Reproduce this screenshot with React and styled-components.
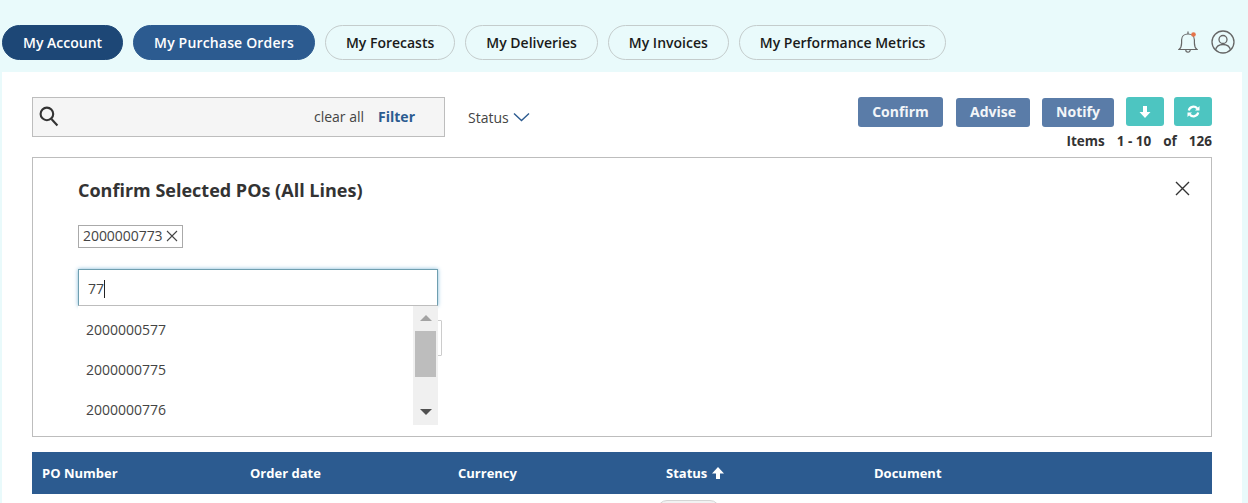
import React from 'react';
import styled, { createGlobalStyle } from 'styled-components';

const Global = createGlobalStyle`
  html, body { margin: 0; padding: 0; height: 503px; overflow: hidden; background: #e9fafb; }
  body { font-family: "Open Sans", "Noto Sans", sans-serif; color: #333; }
  * { box-sizing: border-box; }
`;

const Page = styled.div`
  width: 1248px;
  height: 503px;
  overflow: hidden;
`;
const TopBar = styled.header`
  height: 72px;
  padding: 25px 0 0 2px;
  display: flex;
  align-items: flex-start;
`;
const Tabs = styled.nav`
  display: flex;
  gap: 10px;
`;
const Tab = styled.a`
  height: 35px;
  padding: 0 20px;
  border-radius: 18px;
  display: flex;
  align-items: center;
  font-size: 14px;
  font-weight: 600;
  letter-spacing: ${p => (p.$tone === 'blue' ? '0.17px' : '0')};
  white-space: nowrap;
  border: 1px solid ${p => (p.$tone === 'dark' ? '#1d4776' : p.$tone === 'blue' ? '#2c5b90' : '#c4cccc')};
  background: ${p => (p.$tone === 'dark' ? '#1d4776' : p.$tone === 'blue' ? '#2c5b90' : 'transparent')};
  color: ${p => (p.$tone ? '#fff' : '#1a1a1a')};
`;
const TopIcons = styled.div`
  margin-left: auto;
  margin-right: 13px;
  margin-top: 5px;
  display: flex;
  align-items: center;
  gap: 13px;
`;
const Main = styled.main`
  margin: 0 6px 0 2px;
  height: 431px;
  background: #fff;
  padding: 25px 30px 0;
`;
const Toolbar = styled.div`
  display: flex;
  align-items: flex-start;
  height: 60px;
`;
const Search = styled.div`
  width: 413px;
  height: 40px;
  background: #f5f5f5;
  border: 1px solid #bdbdbd;
  display: flex;
  align-items: center;
  padding: 0 29px 2px 6px;
`;
const ClearAll = styled.span`
  margin-left: auto;
  font-size: 14px;
  color: #444;
`;
const FilterLink = styled.span`
  margin-left: 14px;
  font-size: 14px;
  font-weight: 700;
  color: #2c5b90;
`;
const StatusFilter = styled.div`
  margin-left: 23px;
  height: 40px;
  display: flex;
  align-items: center;
  gap: 4px;
  font-size: 14px;
  color: #444;
`;
const Actions = styled.div`
  margin-left: auto;
  display: flex;
  flex-direction: column;
  align-items: flex-end;
`;
const ActionRow = styled.div`
  display: flex;
  align-items: flex-start;
`;
const ActionButton = styled.button`
  height: ${p => (p.$inset ? 29 : 30)}px;
  width: ${p => p.$w}px;
  margin-left: ${p => p.$ml}px;
  margin-top: ${p => (p.$inset ? 1 : 0)}px;
  border: 0;
  border-radius: 3px;
  background: #5a7ca8;
  color: #f2f5f8;
  font: 700 14px "Open Sans", sans-serif;
  padding: 0 0 2px;
`;
const IconButton = styled.button`
  height: 29px;
  width: 38px;
  margin-left: ${p => p.$ml}px;
  border: 0;
  border-radius: 3px;
  background: #4dc5c1;
  display: flex;
  align-items: center;
  justify-content: center;
  padding: 0;
`;
const Items = styled.div`
  margin-top: 4px;
  display: flex;
  gap: 12px;
  font-size: 13.5px;
  line-height: 20px;
  font-weight: 700;
  color: #333;
`;
const Panel = styled.section`
  position: relative;
  height: 280px;
  border: 1px solid #bdbdbd;
  padding: 20px 45px 0;
`;
const PanelTitle = styled.h2`
  margin: 0;
  font-size: 18px;
  line-height: 25px;
  font-weight: 700;
  color: #333;
`;
const Close = styled.button`
  position: absolute;
  top: 22px;
  right: 20px;
  width: 17px;
  height: 17px;
  border: 0;
  padding: 0;
  background: none;
`;
const Chip = styled.div`
  margin-top: 22px;
  width: 105px;
  height: 23px;
  border: 1px solid #aaa;
  display: flex;
  align-items: center;
  padding: 0 0 2px 4px;
  gap: 3px;
  font-size: 14px;
  letter-spacing: -0.05px;
  color: #444;
`;
const Combo = styled.div`
  position: relative;
  margin-top: 21px;
  width: 360px;
`;
const ComboInput = styled.div`
  height: 37px;
  background: #fff;
  border: 1px solid #6f9fb0;
  border-bottom-color: #bdbdbd;
  box-shadow: 0 0 4px #7fb8d8;
  display: flex;
  align-items: center;
  padding: 2px 0 0 9px;
  font-size: 14px;
  color: #444;
`;
const Caret = styled.span`
  width: 1px;
  height: 18px;
  background: #222;
`;
const BehindBox = styled.div`
  position: absolute;
  top: 51px;
  right: -4px;
  width: 40px;
  height: 36px;
  border: 1px solid #ccc;
  border-radius: 1px;
`;
const Dropdown = styled.ul`
  position: absolute;
  z-index: 2;
  top: 37px;
  left: 0;
  width: 360px;
  height: 119px;
  margin: 0;
  padding: 3px 0 0 8px;
  list-style: none;
  background: #fff;
`;
const Option = styled.li`
  height: 40px;
  display: flex;
  align-items: center;
  font-size: 14px;
  color: #444;
`;
const Scrollbar = styled.div`
  position: absolute;
  top: 0;
  right: 0;
  width: 25px;
  height: 119px;
  background: #f0f0f0;
`;
const Thumb = styled.div`
  position: absolute;
  top: 25px;
  left: 2px;
  width: 21px;
  height: 46px;
  background: #bdbdbd;
`;
const Arrow = styled.span`
  position: absolute;
  left: 7px;
  ${p => (p.$up ? 'top: 9px; border-bottom: 6px solid #a3a3a3;' : 'top: 103px; border-top: 6px solid #505050;')}
  border-left: 6px solid transparent;
  border-right: 6px solid transparent;
`;
const TableHead = styled.div`
  margin-top: 15px;
  height: 42px;
  background: #2c5b90;
  display: grid;
  grid-template-columns: repeat(4, 208px) 1fr;
  align-items: center;
  padding-left: 10px;
`;
const HeadCell = styled.div`
  display: flex;
  align-items: center;
  gap: 5px;
  color: #fff;
  font-size: 13px;
  font-weight: 700;
`;
const Row = styled.div`
  display: grid;
  grid-template-columns: repeat(4, 208px) 1fr;
  padding: 6px 0 0 10px;
`;
const StatusPill = styled.div`
  grid-column: 4;
  margin-left: -9px;
  width: 63px;
  height: 20px;
  border: 1px solid #d4d4d4;
  background: #f2f2f2;
  border-radius: 10px;
`;

const tabs = ['My Forecasts', 'My Deliveries', 'My Invoices', 'My Performance Metrics'];

export default function App() {
  return (
    <Page>
      <Global />
      <TopBar>
        <Tabs>
          <Tab $tone="dark">My Account</Tab>
          <Tab $tone="blue">My Purchase Orders</Tab>
          {tabs.map(t => <Tab key={t}>{t}</Tab>)}
        </Tabs>
        <TopIcons>
          <svg width="20" height="24" viewBox="0 0 20 24" fill="none" stroke="#666" strokeWidth="1.2">
            <path d="M1 19.500c2-1.500 2.600-3 2.600-6.500V10c0-3.500 2.600-6 6.400-6s6.400 2.500 6.400 6v3c0 3.500.6 5 2.600 6.500z" />
            <path d="M10 4V1.500M7.800 20a2.200 2.200 0 0 0 4.400 0" />
            <circle cx="15.500" cy="4.500" r="2.300" fill="#e5734a" stroke="none" />
          </svg>
          <svg width="24" height="24" viewBox="0 0 24 24" fill="none" stroke="#666" strokeWidth="1.300">
            <circle cx="12" cy="12" r="11" />
            <circle cx="12" cy="9.500" r="4" />
            <path d="M4.500 20c.8-3.500 3.800-5.500 7.500-5.500s6.700 2 7.500 5.500" />
          </svg>
        </TopIcons>
      </TopBar>
      <Main>
        <Toolbar>
          <Search>
            <svg width="20" height="21" viewBox="0 0 19 20" fill="none" stroke="#333" strokeWidth="2">
              <circle cx="7.500" cy="7.500" r="6" />
              <path d="M11.800 12.300 17.500 18.500" />
            </svg>
            <ClearAll>clear all</ClearAll>
            <FilterLink>Filter</FilterLink>
          </Search>
          <StatusFilter>
            Status
            <svg width="17" height="10" viewBox="0 0 17 10" fill="none" stroke="#2c5b90" strokeWidth="1.400">
              <path d="M1 1.500 8.500 8.500 16 1.500" />
            </svg>
          </StatusFilter>
          <Actions>
            <ActionRow>
              <ActionButton $w={85} $ml={0}>Confirm</ActionButton>
              <ActionButton $w={74} $ml={13} $inset>Advise</ActionButton>
              <ActionButton $w={72} $ml={12} $inset>Notify</ActionButton>
              <IconButton $ml={12}>
                <svg width="12" height="12" viewBox="0 0 12 12" fill="#fff">
                  <path d="M4 0h4v6h3.500L6 12 .5 6H4z" />
                </svg>
              </IconButton>
              <IconButton $ml={10}>
                <svg width="13" height="13" viewBox="0 0 13 13" fill="none" stroke="#fff" strokeWidth="2.200">
                  <path d="M1.800 5.500A4.800 4.800 0 0 1 10.200 3.500" />
                  <path d="M11.200 7.500A4.800 4.800 0 0 1 2.800 9.500" />
                  <path d="M12.500 1v4.500H8z" fill="#fff" stroke="none" />
                  <path d="M.5 12V7.500H5z" fill="#fff" stroke="none" />
                </svg>
              </IconButton>
            </ActionRow>
            <Items>
              <span>Items</span>
              <span>1 - 10</span>
              <span>of</span>
              <span>126</span>
            </Items>
          </Actions>
        </Toolbar>
        <Panel>
          <PanelTitle>Confirm Selected POs (All Lines)</PanelTitle>
          <Close aria-label="Close">
            <svg width="17" height="17" viewBox="0 0 17 17" stroke="#333" strokeWidth="1.400">
              <path d="M2 2 15 15M15 2 2 15" />
            </svg>
          </Close>
          <Chip>
            2000000773
            <svg width="12" height="12" viewBox="0 0 12 12" stroke="#444" strokeWidth="1.100">
              <path d="M1 1 11 11M11 1 1 11" />
            </svg>
          </Chip>
          <Combo>
            <ComboInput>77<Caret /></ComboInput>
            <BehindBox />
            <Dropdown>
              <Option>2000000577</Option>
              <Option>2000000775</Option>
              <Option>2000000776</Option>
              <Scrollbar>
                <Arrow $up />
                <Thumb />
                <Arrow />
              </Scrollbar>
            </Dropdown>
          </Combo>
        </Panel>
        <TableHead>
          <HeadCell>PO Number</HeadCell>
          <HeadCell>Order date</HeadCell>
          <HeadCell>Currency</HeadCell>
          <HeadCell>
            Status
            <svg width="12" height="12" viewBox="0 0 12 12" fill="#fff">
              <path d="M6 0 12 6.500H8V12H4V6.500H0z" />
            </svg>
          </HeadCell>
          <HeadCell>Document</HeadCell>
        </TableHead>
        <Row><StatusPill /></Row>
      </Main>
    </Page>
  );
}
